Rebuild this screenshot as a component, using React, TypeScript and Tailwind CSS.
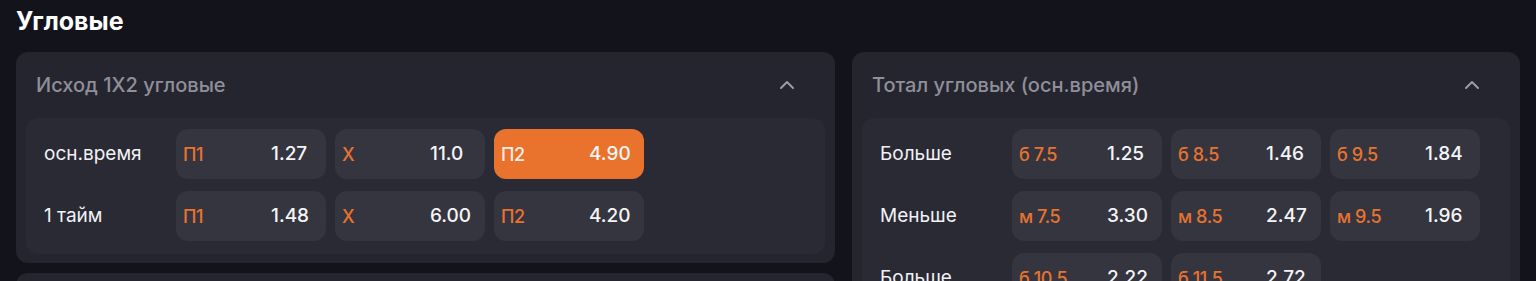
import { ChevronUp } from "lucide-react";

type Odd = { label: string; value: string; active?: boolean } | null;
type Row = { name: string; odds: Odd[] };

const outcomeRows: Row[] = [
  {
    name: "осн.время",
    odds: [
      { label: "П1", value: "1.27" },
      { label: "X", value: "11.0" },
      { label: "П2", value: "4.90", active: true },
    ],
  },
  {
    name: "1 тайм",
    odds: [
      { label: "П1", value: "1.48" },
      { label: "X", value: "6.00" },
      { label: "П2", value: "4.20" },
    ],
  },
];

const totalRows: Row[] = [
  {
    name: "Больше",
    odds: [
      { label: "б 7.5", value: "1.25" },
      { label: "б 8.5", value: "1.46" },
      { label: "б 9.5", value: "1.84" },
    ],
  },
  {
    name: "Меньше",
    odds: [
      { label: "м 7.5", value: "3.30" },
      { label: "м 8.5", value: "2.47" },
      { label: "м 9.5", value: "1.96" },
    ],
  },
  {
    name: "Больше",
    odds: [
      { label: "б 10.5", value: "2.22" },
      { label: "б 11.5", value: "2.72" },
      null,
    ],
  },
];

const OddButton = ({ odd }: { odd: Odd }) => {
  if (!odd) return <div className="w-[150px] h-[50px]" />;
  return (
    <button
      className={
        odd.active
          ? "w-[150px] h-[50px] rounded-[12px] bg-[#e9722d] flex items-center pl-[7px] text-left"
          : "w-[150px] h-[50px] rounded-[12px] bg-[#35353f] flex items-center pl-[7px] text-left"
      }
    >
      <span
        className={
          odd.active
            ? "w-[88px] text-[18px] font-medium text-[#fdeee4] tracking-[-0.4px]"
            : "w-[88px] text-[18px] font-medium text-[#e8732f] tracking-[-0.4px]"
        }
      >
        {odd.label}
      </span>
      <span className="text-[19px] font-medium text-[#f4f4f6]">{odd.value}</span>
    </button>
  );
};

const MarketCard = ({ title, rows, width }: { title: string; rows: Row[]; width: string }) => (
  <div className={`${width} rounded-[12px] bg-[#25252f] pb-[9px]`}>
    <div className="h-[66px] flex items-center justify-between pl-[20px] pr-[36px]">
      <span className="text-[20px] text-[#8f8f9a] font-medium">{title}</span>
      <ChevronUp size={24} strokeWidth={2} className="text-[#9b9ba6]" />
    </div>
    <div className="mx-[10px] rounded-[12px] bg-[#2a2a34] pt-[11px] pb-[13px] pl-[18px] flex flex-col gap-[12px]">
      {rows.map((row, i) => (
        <div key={i} className="flex items-center">
          <span className="w-[132px] text-[19px] text-[#f2f2f4]">{row.name}</span>
          <div className="flex gap-[9px]">
            {row.odds.map((odd, j) => (
              <OddButton key={j} odd={odd} />
            ))}
          </div>
        </div>
      ))}
    </div>
  </div>
);

export default function App() {
  return (
    <div
      className="min-h-screen bg-[#13131c] px-[16px] overflow-hidden"
      style={{ fontFamily: "Inter, 'Noto Sans', sans-serif" }}
    >
      <h2 className="h-[52px] pt-[3px] text-[25px] font-bold text-white">Угловые</h2>
      <div className="flex gap-[17px] items-start">
        <div className="flex flex-col gap-[10px]">
          <MarketCard title="Исход 1X2 угловые" rows={outcomeRows} width="w-[819px]" />
          <div className="w-[819px] h-[120px] rounded-[12px] bg-[#25252f]" />
        </div>
        <MarketCard title="Тотал угловых (осн.время)" rows={totalRows} width="w-[669px]" />
      </div>
    </div>
  );
}
